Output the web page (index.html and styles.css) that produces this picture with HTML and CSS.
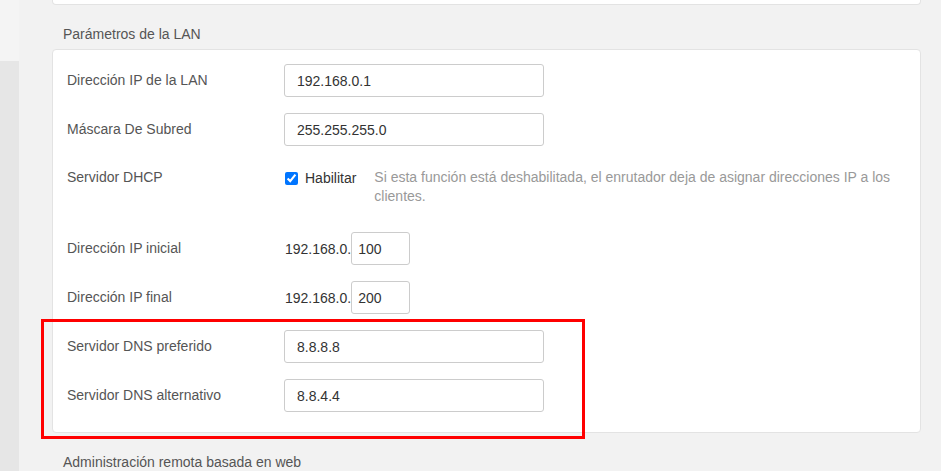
FILE: index.html
```html
<!doctype html>
<html>

<head>
<meta charset="utf-8">
<title>Parámetros de la LAN</title>
<link rel="stylesheet" href="styles.css">
</head>

<body>
    <div id="page">
        <div id="sidebar">
            <div class="side-top"></div>
            <div class="side-rest"></div>
        </div>

        <div id="main">
            <div class="card card-prev"></div>

            <p class="section-title">Parámetros de la LAN</p>

            <div class="card card-lan">
                <div class="row">
                    <label class="lbl">Dirección IP de la LAN</label>
                    <input type="text" class="field" value="192.168.0.1">
                </div>
                <div class="row">
                    <label class="lbl">Máscara De Subred</label>
                    <input type="text" class="field" value="255.255.255.0">
                </div>
                <div class="row row-dhcp">
                    <label class="lbl">Servidor DHCP</label>
                    <label class="check"><input type="checkbox" checked> Habilitar</label>
                    <span class="tip">Si esta función está deshabilitada, el enrutador deja de asignar direcciones IP a los clientes.</span>
                </div>
                <div class="row">
                    <label class="lbl">Dirección IP inicial</label>
                    <span class="prefix">192.168.0.</span>
                    <input type="text" class="field short" value="100">
                </div>
                <div class="row">
                    <label class="lbl">Dirección IP final</label>
                    <span class="prefix">192.168.0.</span>
                    <input type="text" class="field short" value="200">
                </div>
                <div class="row">
                    <label class="lbl">Servidor DNS preferido</label>
                    <input type="text" class="field" value="8.8.8.8">
                </div>
                <div class="row">
                    <label class="lbl">Servidor DNS alternativo</label>
                    <input type="text" class="field" value="8.8.4.4">
                </div>

                <div class="mark"></div>
            </div>

            <p class="section-title">Administración remota basada en web</p>
        </div>
    </div>
</body>

</html>
```

FILE: styles.css
```css
*{
    margin : 0;
    padding : 0;
    box-sizing : border-box;
}
html, body{
    height : 100%;
    overflow : hidden;
}
body{
    background : #f2f2f2;
    font-family : "Liberation Sans", Arial, sans-serif;
    font-size : 14px;
    color : #555;
}

#page{
    display : flex;
    height : 100%;
}

#sidebar{
    width : 19px;
    display : flex;
    flex-direction : column;
}
.side-top{
    height : 61px;
    background : #f4f4f4;
}
.side-rest{
    flex : 1;
    background : #e6e6e6;
}

#main{
    flex : 1;
    padding : 0 20px 0 33px;
}

.card{
    background : white;
    border : 1px solid #e3e3e3;
    border-radius : 4px;
}
.card-prev{
    height : 5px;
    border-top : none;
    border-radius : 0 0 4px 4px;
}
.card-lan{
    position : relative;
    padding : 14px 14px 20px 14px;
}

.section-title{
    padding : 20px 0 6px 11px;
    line-height : 18px;
    color : #555;
}

.row{
    display : flex;
    align-items : center;
}
.row + .row{
    margin-top : 16px;
}
.lbl{
    width : 217px;
    flex-shrink : 0;
    color : #555;
    line-height : 16px;
    margin-top : -1px;
}

.field{
    width : 260px;
    height : 33px;
    padding : 0 12px;
    border : 1px solid #ccc;
    border-radius : 3px;
    font-family : inherit;
    font-size : 14px;
    color : #333;
    background : white;
}
.field.short{
    width : 59px;
    padding : 0 6px;
}
.prefix{
    margin-left : 1px;
    color : #333;
}

.row-dhcp{
    align-items : flex-start;
    padding-top : 6px;
    min-height : 54px;
    line-height : 20px;
}
.row-dhcp .lbl{
    line-height : 20px;
}
.check{
    display : flex;
    align-items : center;
    gap : 7px;
    color : #333;
    white-space : nowrap;
    margin-left : 1px;
}
.check input{
    width : 13px;
    height : 13px;
    margin : 0;
}
.tip{
    flex : 1;
    margin-left : 18px;
    color : #999;
    line-height : 19px;
}

.mark{
    position : absolute;
    left : -12px;
    top : 269px;
    width : 544px;
    height : 120px;
    border : 3px solid #f00;
}
```
